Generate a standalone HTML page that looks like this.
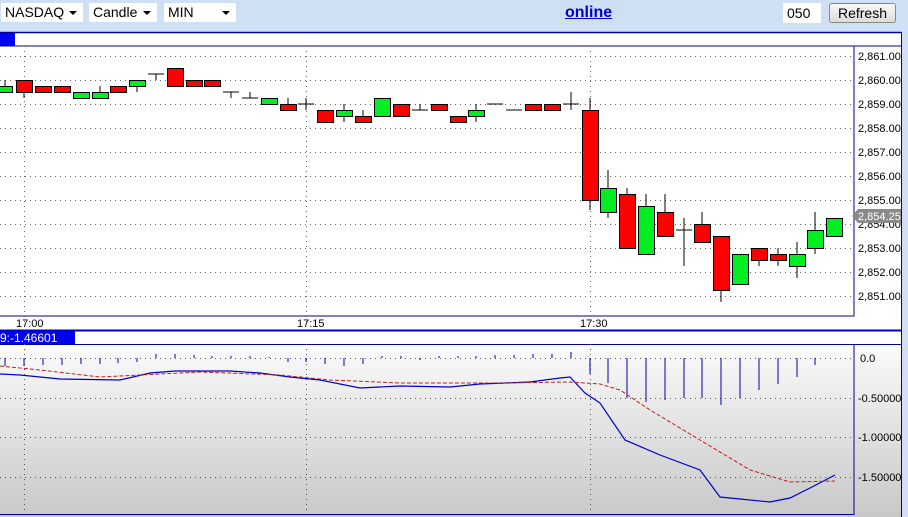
<!DOCTYPE html>
<html><head><meta charset="utf-8"><style>
html,body{margin:0;padding:0;width:908px;height:517px;overflow:hidden;background:#cfe0f5;font-family:"Liberation Sans",sans-serif;}
.sel{position:absolute;top:3px;height:19px;background:#fff;font-size:14px;line-height:19px;padding-left:4px;box-sizing:border-box;}
.sel:after{content:"";position:absolute;right:6px;top:8px;border-left:4px solid transparent;border-right:4px solid transparent;border-top:4px solid #000;}
</style></head><body>
<div class="sel" style="left:1px;width:82px">NASDAQ</div>
<div class="sel" style="left:89px;width:68px">Candle</div>
<div class="sel" style="left:164px;width:72px">MIN</div>
<a style="position:absolute;left:565px;top:4px;font-size:16px;font-weight:bold;color:#0000cc;text-decoration:underline">online</a>
<div style="position:absolute;left:783px;top:3px;width:38px;height:20px;background:#fff;font-size:14px;line-height:20px;padding-left:4px;box-sizing:border-box">050</div>
<div style="position:absolute;left:829px;top:3px;width:67px;height:20px;border:1px solid #888;border-radius:3px;background:linear-gradient(#f8f8f8,#dcdcdc);font-size:14px;line-height:19px;text-align:center;box-sizing:border-box">Refresh</div>
<svg width="908" height="517" style="position:absolute;left:0;top:0" font-family="Liberation Sans, sans-serif">
<defs><linearGradient id="g" x1="0" y1="0" x2="0" y2="1"><stop offset="0" stop-color="#fbfbfb"/><stop offset="1" stop-color="#c8c8c8"/></linearGradient></defs>
<rect x="0" y="32" width="901" height="485" fill="#fff"/>
<line x1="0" y1="32.5" x2="901" y2="32.5" stroke="#00009a" stroke-width="1.5"/>
<line x1="901.5" y1="32" x2="901.5" y2="517" stroke="#00009a"/>
<rect x="0" y="33" width="15" height="13" fill="#0000ee"/>
<line x1="0" y1="46" x2="901" y2="46" stroke="#00009a"/>
<rect x="-2" y="46" width="856" height="270" fill="#fff" stroke="#00009a"/>
<g stroke="#666" stroke-dasharray="1,4">
<line x1="0" y1="56.5" x2="854" y2="56.5"/><line x1="0" y1="80.5" x2="854" y2="80.5"/><line x1="0" y1="104.5" x2="854" y2="104.5"/><line x1="0" y1="128.5" x2="854" y2="128.5"/><line x1="0" y1="152.5" x2="854" y2="152.5"/><line x1="0" y1="176.5" x2="854" y2="176.5"/><line x1="0" y1="200.5" x2="854" y2="200.5"/><line x1="0" y1="224.5" x2="854" y2="224.5"/><line x1="0" y1="248.5" x2="854" y2="248.5"/><line x1="0" y1="272.5" x2="854" y2="272.5"/><line x1="0" y1="296.5" x2="854" y2="296.5"/>
<line x1="24.5" y1="46" x2="24.5" y2="322"/><line x1="306.5" y1="46" x2="306.5" y2="322"/><line x1="590.5" y1="46" x2="590.5" y2="322"/>
</g>
<g font-size="11" fill="#000">
<text x="858" y="60">2,861.00</text><text x="858" y="84">2,860.00</text><text x="858" y="108">2,859.00</text><text x="858" y="132">2,858.00</text><text x="858" y="156">2,857.00</text><text x="858" y="180">2,856.00</text><text x="858" y="204">2,855.00</text><text x="858" y="228">2,854.00</text><text x="858" y="252">2,853.00</text><text x="858" y="276">2,852.00</text><text x="858" y="300">2,851.00</text>
</g>
<polygon points="852,216 858,209 901,209 901,223 858,223" fill="#8a8a8a"/>
<text x="858" y="220" font-size="11" fill="#fff">2,854.25</text>
<g stroke="#000" stroke-width="1">
<path d="M5 80V92M24 80V98M100 86V98M137 80V92M156 74V80M231 92V98M250 92V98M288 98V110M306 98V110M344 104V122M363 110V122M420 104V110M476 104V122M571 92V110M590 98V210M608 170V218M627 188V248M646 194V254M665 194V236M684 218V266M702 212V242M721 236V302M759 248V266M778 248V266M797 242V278M815 212V254"/>
<path d="M148 74H164M223 92H239M242 98H258M298 104H314M412 110H428M487 104H503M506 110H522M563 104H579M676 230H692"/>
</g>
<g stroke="#000" stroke-width="1" fill="#ff0000">
<rect x="16.5" y="80.5" width="16" height="12"/><rect x="35.5" y="86.5" width="16" height="6"/><rect x="54.5" y="86.5" width="16" height="6"/><rect x="110.5" y="86.5" width="16" height="6"/><rect x="167.5" y="68.5" width="16" height="18"/><rect x="186.5" y="80.5" width="16" height="6"/><rect x="204.5" y="80.5" width="16" height="6"/><rect x="280.5" y="104.5" width="16" height="6"/><rect x="317.5" y="110.5" width="16" height="12"/><rect x="355.5" y="116.5" width="16" height="6"/><rect x="393.5" y="104.5" width="16" height="12"/><rect x="431.5" y="104.5" width="16" height="6"/><rect x="450.5" y="116.5" width="16" height="6"/><rect x="525.5" y="104.5" width="16" height="6"/><rect x="544.5" y="104.5" width="16" height="6"/><rect x="582.5" y="110.5" width="16" height="90"/><rect x="619.5" y="194.5" width="16" height="54"/><rect x="657.5" y="212.5" width="16" height="24"/><rect x="694.5" y="224.5" width="16" height="18"/><rect x="713.5" y="236.5" width="16" height="54"/><rect x="751.5" y="248.5" width="16" height="12"/><rect x="770.5" y="254.5" width="16" height="6"/>
</g>
<g stroke="#000" stroke-width="1" fill="#00ee22">
<rect x="-3.5" y="86.5" width="16" height="6"/><rect x="73.5" y="92.5" width="16" height="6"/><rect x="92.5" y="92.5" width="16" height="6"/><rect x="129.5" y="80.5" width="16" height="6"/><rect x="261.5" y="98.5" width="16" height="6"/><rect x="336.5" y="110.5" width="16" height="6"/><rect x="374.5" y="98.5" width="16" height="18"/><rect x="468.5" y="110.5" width="16" height="6"/><rect x="600.5" y="188.5" width="16" height="24"/><rect x="638.5" y="206.5" width="16" height="48"/><rect x="732.5" y="254.5" width="16" height="30"/><rect x="789.5" y="254.5" width="16" height="12"/><rect x="807.5" y="230.5" width="16" height="18"/><rect x="826.5" y="218.5" width="16" height="18"/>
</g>
<g font-size="11"><text x="16" y="327">17:00</text><text x="297" y="327">17:15</text><text x="580" y="327">17:30</text></g>
<line x1="0" y1="330.5" x2="901" y2="330.5" stroke="#0000cc" stroke-width="2"/>
<rect x="0" y="331" width="75" height="13" fill="#0000ee"/>
<text x="0" y="342" font-size="12" fill="#fff">9:-1.46601</text>
<rect x="0" y="344" width="901" height="173" fill="url(#g)"/>
<line x1="0" y1="344.5" x2="901" y2="344.5" stroke="#00009a"/>
<rect x="-2" y="344.5" width="856" height="170" fill="none" stroke="#00009a"/>
<line x1="901.5" y1="344" x2="901.5" y2="517" stroke="#00009a"/>
<g stroke="#555" stroke-dasharray="1,4">
<line x1="0" y1="358.5" x2="854" y2="358.5"/><line x1="0" y1="398.5" x2="854" y2="398.5"/><line x1="0" y1="437.5" x2="854" y2="437.5"/><line x1="0" y1="477.5" x2="854" y2="477.5"/>
<line x1="24.5" y1="344" x2="24.5" y2="514"/><line x1="306.5" y1="344" x2="306.5" y2="514"/><line x1="590.5" y1="344" x2="590.5" y2="514"/>
</g>
<g font-size="11"><text x="860" y="362">0.0</text><text x="858" y="402">-0.50000</text><text x="858" y="441">-1.00000</text><text x="858" y="481">-1.50000</text></g>
<g stroke="#0000aa" stroke-width="1">
<path d="M5 358V366M24 358V366M43 358V365M62 358V365M81 358V364M100 358V364M118 358V363M137 358V362M156 354V358M175 354V358M194 355V358M212 356V358M231 356V358M250 356V358M269 357V358M288 358V362M306 358V362M325 358V364M344 358V366M363 358V364M382 356V358M401 356V358M420 358V360M439 356V358M458 356V358M476 356V358M495 355V358M514 355V358M533 354V358M552 354V358M571 352V358M590 358V374M608 358V383M627 358V398M646 358V402M665 358V400M684 358V398M702 358V398M721 358V405M740 358V398M759 358V390M778 358V384M797 358V377M815 358V365"/>
</g>
<polyline fill="none" stroke="#0000cc" stroke-width="1.2" points="0,374 20,375 40,377 60,379 120,380 150,373 175,371 230,371 260,373 290,377 320,380 360,388 400,386 450,387 480,384 530,382 560,378 570,377 585,393 600,403 625,440 660,455 700,470 720,497 740,499 770,502 790,498 810,488 835,475"/>
<polyline fill="none" stroke="#bb2222" stroke-width="1" stroke-dasharray="4,2" points="0,366 40,370 100,377 200,372 280,375 330,380 400,383 500,383 570,382 600,384 620,390 650,410 700,440 750,470 790,482 835,481"/>
</svg>
</body></html>
